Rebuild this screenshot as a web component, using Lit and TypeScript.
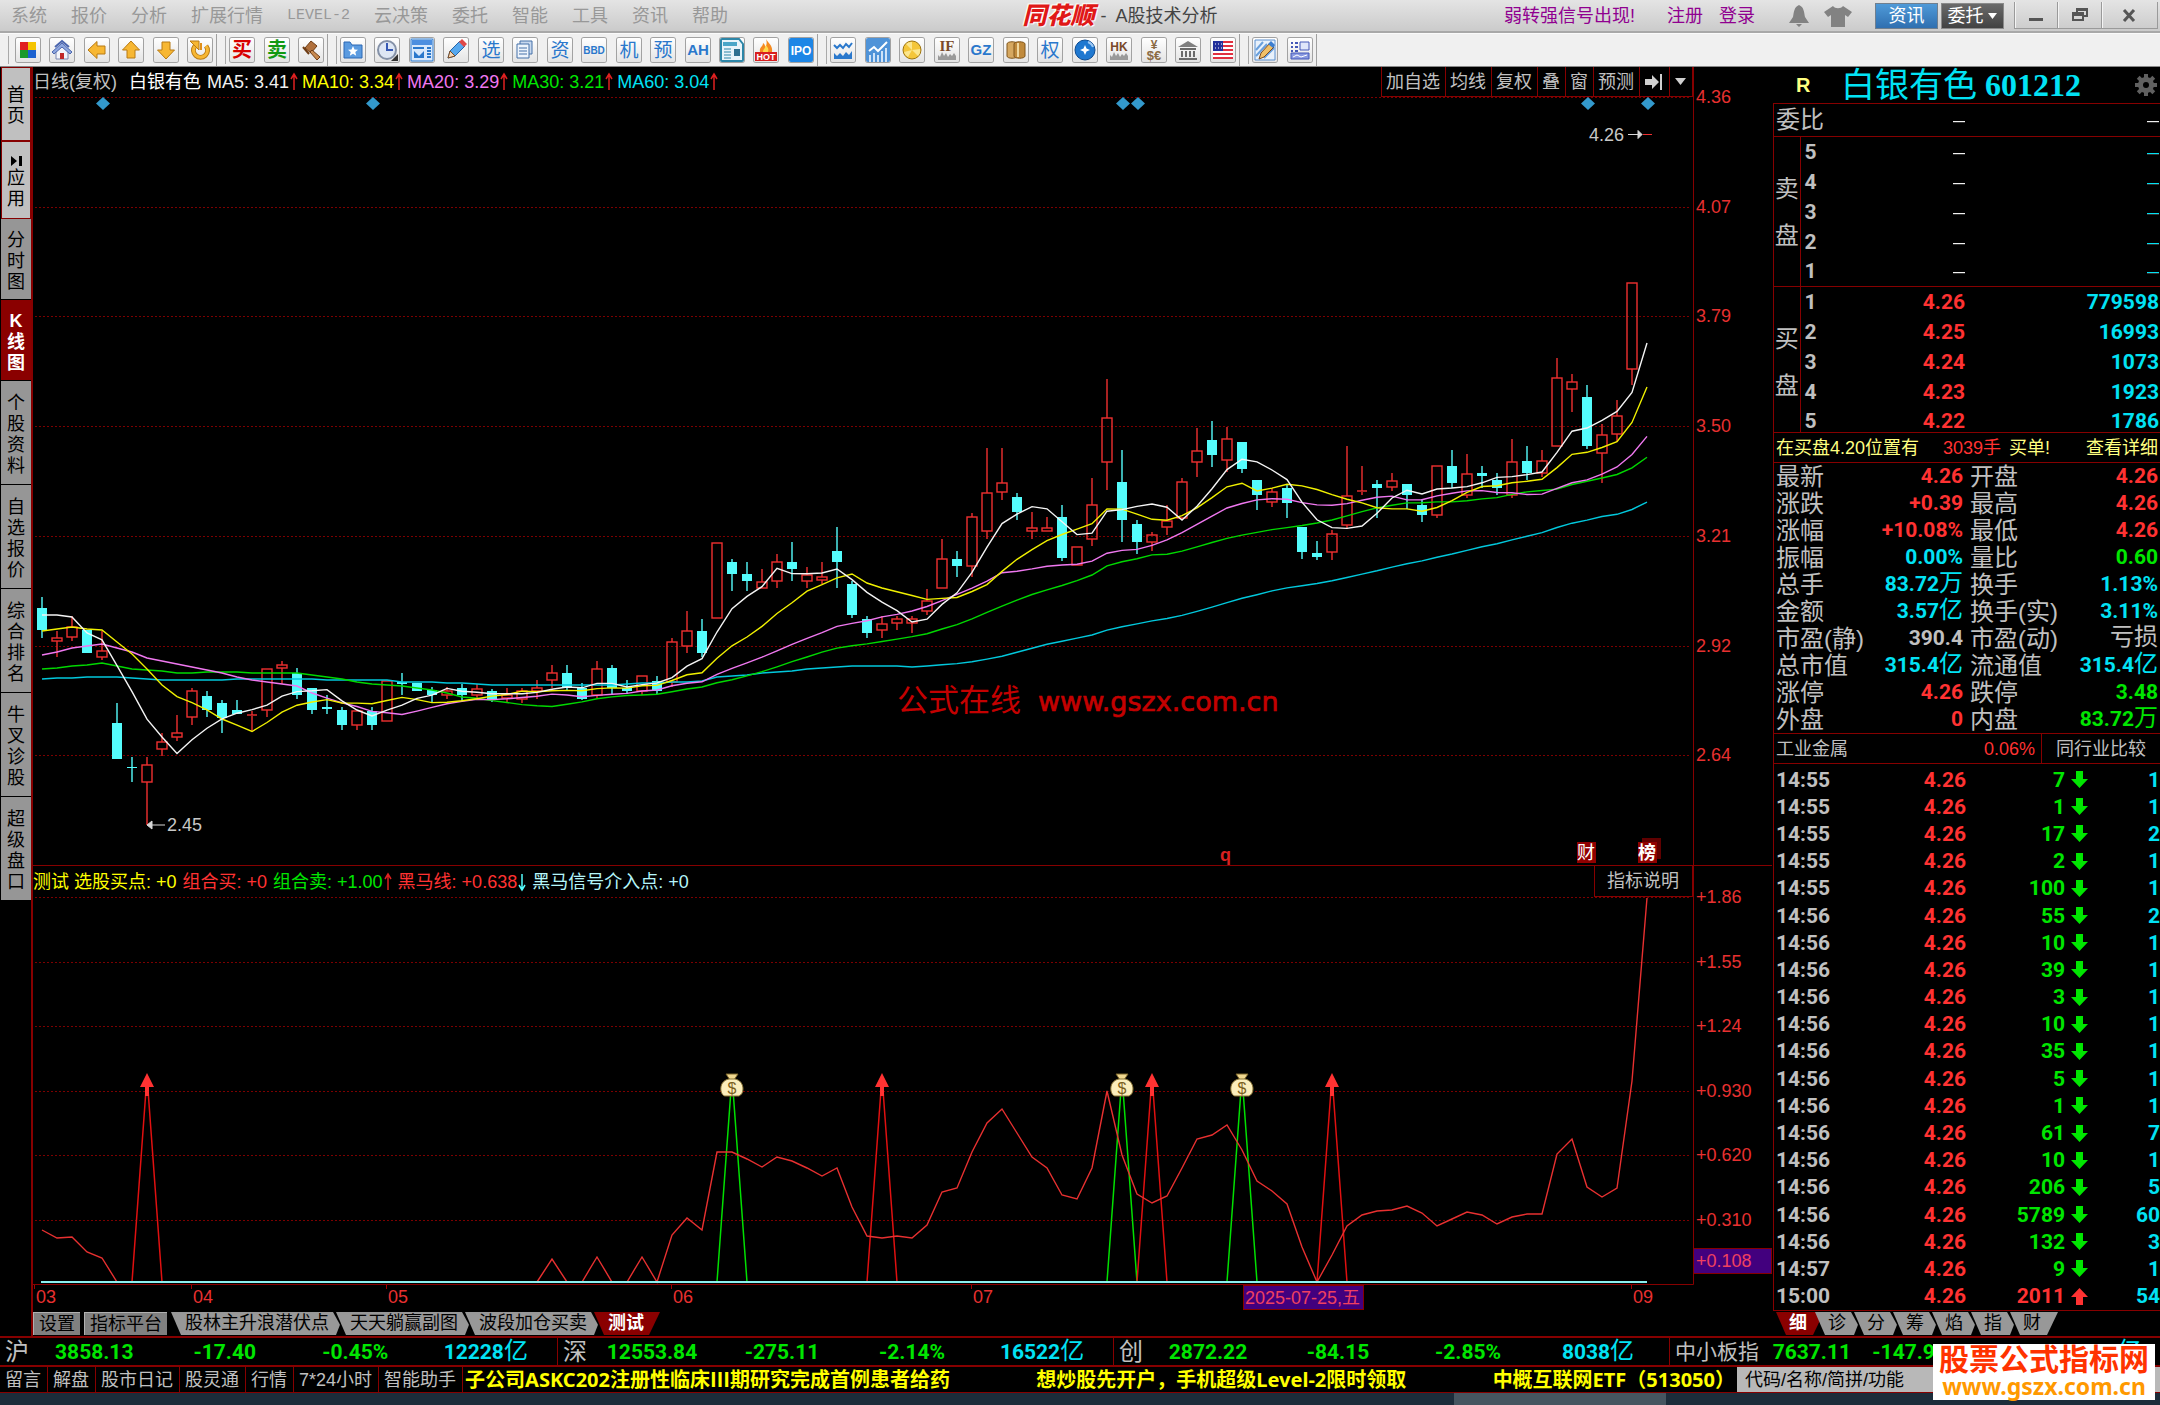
import { LitElement, html, svg, css } from "lit";
import { customElement } from "lit/decorators.js";
import { classMap } from "lit/directives/class-map.js";

/* ---------- chart data, in canvas units ---------- */

// [up?, high, body top, body bottom, low], one entry per trading day
const CANDLES: number[][] = [
  [0, 597, 608, 630, 638], [1, 631, 638, 641, 657], [1, 616, 627, 637, 641], [0, 630, 630, 653, 653],
  [1, 631, 651, 657, 660], [0, 703, 723, 759, 759], [0, 757, 767, 768, 782], [1, 757, 765, 782, 825],
  [1, 733, 742, 749, 756], [1, 715, 733, 737, 741], [1, 688, 691, 717, 725], [0, 691, 696, 710, 717],
  [0, 700, 703, 718, 733], [0, 700, 710, 714, 714], [1, 711, 715, 716, 732], [1, 669, 669, 710, 717],
  [1, 661, 665, 668, 684], [0, 668, 673, 695, 699], [0, 688, 688, 710, 714], [0, 695, 707, 709, 714],
  [0, 707, 710, 725, 730], [1, 711, 711, 725, 730], [0, 707, 711, 725, 730], [1, 681, 681, 721, 721],
  [0, 673, 682, 684, 695], [0, 683, 683, 691, 691], [0, 687, 690, 695, 703], [1, 687, 691, 695, 699],
  [0, 684, 688, 695, 702], [1, 684, 689, 695, 698], [0, 689, 691, 699, 702], [1, 688, 695, 698, 703],
  [1, 688, 691, 699, 703], [1, 680, 688, 691, 699], [1, 665, 673, 680, 688], [0, 665, 673, 688, 691],
  [0, 683, 688, 699, 700], [1, 661, 669, 695, 698], [0, 665, 668, 688, 694], [0, 680, 688, 691, 694],
  [1, 676, 676, 691, 695], [0, 676, 681, 691, 694], [1, 638, 642, 682, 687], [1, 611, 631, 646, 653],
  [0, 619, 631, 653, 657], [1, 543, 543, 618, 618], [0, 559, 562, 574, 591], [0, 562, 574, 581, 591],
  [1, 569, 582, 588, 588], [1, 554, 562, 581, 588], [0, 542, 562, 569, 581], [1, 567, 575, 581, 588],
  [1, 562, 577, 580, 584], [0, 527, 551, 562, 588], [0, 581, 584, 615, 618], [0, 616, 619, 633, 638],
  [1, 616, 624, 630, 638], [1, 616, 619, 623, 630], [1, 616, 619, 623, 633], [1, 589, 601, 611, 615],
  [1, 539, 559, 588, 588], [0, 551, 559, 566, 577], [1, 513, 517, 566, 577], [1, 448, 493, 531, 539],
  [1, 448, 483, 492, 500], [0, 493, 497, 512, 520], [1, 512, 528, 531, 539], [1, 517, 528, 531, 531],
  [0, 505, 517, 558, 561], [1, 547, 547, 565, 565], [1, 478, 505, 539, 546], [1, 379, 418, 462, 490],
  [0, 450, 482, 520, 542], [0, 520, 524, 542, 554], [1, 532, 535, 542, 551], [1, 505, 521, 527, 535],
  [1, 478, 482, 518, 520], [1, 428, 451, 462, 477], [0, 421, 440, 455, 467], [1, 427, 439, 460, 472],
  [0, 442, 442, 469, 473], [0, 480, 480, 495, 510], [1, 488, 492, 502, 507], [0, 484, 488, 503, 518],
  [0, 527, 527, 552, 559], [0, 541, 553, 557, 560], [1, 530, 534, 552, 560], [1, 446, 496, 525, 528],
  [1, 466, 491, 492, 495], [0, 480, 484, 488, 518], [1, 473, 481, 487, 491], [0, 484, 484, 495, 509],
  [0, 499, 505, 515, 522], [1, 466, 466, 515, 518], [0, 450, 466, 483, 488], [1, 454, 474, 495, 498],
  [0, 466, 473, 476, 488], [0, 473, 480, 488, 495], [1, 439, 462, 495, 498], [0, 446, 461, 473, 480],
  [1, 450, 461, 473, 477], [1, 358, 378, 446, 446], [1, 374, 382, 389, 412], [0, 385, 397, 446, 449],
  [1, 424, 435, 453, 483], [1, 400, 416, 434, 442], [1, 283, 283, 369, 385],
];
const LAST_CLOSE = 135;

// averages for the first days, whose history lies left of the canvas
const AVERAGES: { period: number; color: string; lead: number[] }[] = [
  { period: 60, color: "#02c8dc", lead: [679, 678, 678, 677, 677, 677, 678, 679, 680, 680, 680, 680, 680, 679, 679, 679, 679, 679, 679, 680, 680, 680, 680, 680, 682, 682, 682, 683, 683, 684, 685, 685, 685, 685, 685, 685, 685, 685, 685, 684, 683, 683, 682, 682, 681, 677, 676, 675, 673, 672, 671, 669, 668, 667, 666, 666, 666, 666, 667] },
  { period: 30, color: "#00d800", lead: [669, 668, 666, 665, 663, 666, 669, 670, 671, 673, 673, 672, 672, 672, 673, 673, 673, 673, 675, 677, 679, 682, 684, 685, 686, 688, 690, 693, 697] },
  { period: 20, color: "#f078f0", lead: [655, 652, 648, 646, 644, 648, 652, 658, 661, 664, 667, 670, 673, 677, 680, 682, 684, 686, 693] },
  { period: 10, color: "#f0f000", lead: [631, 629, 627, 629, 630, 642, 654, 669, 685] },
  { period: 5, color: "#f4f4f4", lead: [615, 615, 617, 633] },
];

const DARK_HORSE: number[] = [
  1230, 1238, 1237, 1252, 1258, ...new Array(29).fill(1282), 1259, 1282, 1282, 1257, 1282, 1282, 1257, 1282, 1235,
  1218, 1230, 1152, 1152, 1159, 1167, 1157, 1161, 1168, 1176, 1168, 1207, 1236, 1238, 1236, 1238, 1225,
  1192, 1188, 1152, 1123, 1109, 1133, 1157, 1168, 1195, 1199, 1168, 1091, 1155, 1194, 1203, 1196, 1168,
  1139, 1135, 1125, 1150, 1181, 1191, 1204, 1247, 1282, 1255, 1226, 1215, 1211, 1210, 1206, 1213, 1226, 1219, 1212,
  1215, 1224, 1217, 1214, 1214, 1154, 1139, 1187, 1197, 1188, 1081, 898,
];

const px = (i: number) => 42 + 15 * i;
const closes = [...CANDLES.map((c) => (c[0] ? c[2] : c[3])), LAST_CLOSE];

function averagePoints(period: number, lead: number[]): string {
  return closes
    .map((_, i) => {
      const y = i < period - 1 ? lead[i] : closes.slice(i - period + 1, i + 1).reduce((a, b) => a + b, 0) / period;
      return `${px(i)},${Math.round(y * 10) / 10}`;
    })
    .join(" ");
}

/* ---------- small drawings ---------- */

const arrow = (down = false, color = "#e02020") => html`
  <svg class="trend" viewBox="0 0 8 20" width="8" height="20" aria-hidden="true">
    <path d=${down ? "M4 2V18M1 13L4 18L7 13" : "M4 18V2M1 7L4 2L7 7"} fill="none" stroke=${color} stroke-width="1.5" />
  </svg>`;

const glyph = (t: string, color: string, size = 20, weight = 400) =>
  svg`<text x="12" y=${12 + Math.round(size * 0.37)} text-anchor="middle" font-size=${size} font-weight=${weight} fill=${color}>${t}</text>`;

const letters = (t: string, color: string, size: number) =>
  svg`<text x="12" y=${12 + Math.round(size * 0.36)} text-anchor="middle" font-size=${size} font-weight="700" fill=${color}>${t}</text>`;

const GOLD = "#f7b733";
const BLUE = "#2a78cc";
const bigArrow = (turn: number) =>
  svg`<path transform="rotate(${turn} 12 12)" d="M3 12L12 3.5V8H20V16H12V20.5Z" fill=${GOLD} stroke="#b87a14" stroke-linejoin="round"/>`;
const skyline = svg`<path d="M3 22V17L5 19L7 14L9 18L11 15L13 19L15 16L17 18L19 15L21 18V22Z" fill="#9a9a9a"/>`;

const TOOL_GROUPS: { name: string; icons: [string, unknown][] }[] = [
  {
    name: "g6",
    icons: [
      ["板块", svg`<path d="M4 4h8v8H4z" fill="#e02020"/><path d="M12 4h8v8h-8z" fill="#f4c400"/><path d="M4 12h8v8H4z" fill="#1a9a2a"/><path d="M12 12h8v8h-8z" fill="#1c62d0"/>`],
      ["首页", svg`<path d="M6 13V21H18V13L12 8Z" fill="#f2f4fa" stroke="#7b86b0"/><path d="M2 14L12 5L22 14L20 16L12 9L4 16Z" fill="#8fa8e0" stroke="#4b66ae" stroke-linejoin="round"/><path d="M5 9L12 3L19 9" fill="none" stroke="#4b66ae" stroke-width="2"/><path d="M10 15h4v6h-4z" fill="#c02828"/>`],
      ["后退", bigArrow(0)],
      ["向上", bigArrow(90)],
      ["向下", bigArrow(270)],
      ["刷新", svg`<path d="M7 8A7 7 0 1 0 18 8" fill="none" stroke="#b87a14" stroke-width="5"/><path d="M7 8A7 7 0 1 0 18 8" fill="none" stroke=${GOLD} stroke-width="3"/><path d="M2 3H11V12Z" fill=${GOLD} stroke="#b87a14"/><path d="M13 5V12" stroke="#e0901c" stroke-width="2"/>`],
    ],
  },
  {
    name: "g3",
    icons: [
      ["买入", glyph("买", "#d80000", 20, 700)],
      ["卖出", glyph("卖", "#119911", 20, 700)],
      ["交易", svg`<path d="M12 3L18 8L12 15L6 10Z" fill="#b0703c" stroke="#6e3c14"/><path d="M13 12L21 19L18 22L11 14Z" fill="#c88a50" stroke="#6e3c14"/><path d="M4 9L10 16" stroke="#6e3c14" stroke-width="2"/>`],
    ],
  },
  {
    name: "g14",
    icons: [
      ["收藏", svg`<path d="M3 4H9L11 7H21V20H3Z" fill="#5b9be0" stroke="#2c69b4"/><path d="M12 8l1.500 3.500 3.500.3-2.700 2.300.9 3.600-3.200-2-3.200 2 .9-3.600L7 11.800l3.500-.3z" fill="#fff"/>`],
      ["时间", svg`<circle cx="12" cy="12" r="9" fill="#dde6f4" stroke="#8592a8" stroke-width="2"/><path d="M12 5V12H18" fill="none" stroke="#3558b4" stroke-width="2"/><path d="M23 16V23H16Z" fill="#333"/>`],
      ["窗口", svg`<path d="M1 1H23V23H1Z" fill="#d8e8fb" stroke=${BLUE}/><path d="M2 2H22V7H2Z" fill="#4d8fe0"/><path d="M3 10h11M17 10h4M17 13h4M17 16h4M17 19h4" stroke=${BLUE} stroke-width="2"/><path d="M4 13V20H14V13L9 18Z" fill=${BLUE}/>`],
      ["画笔", svg`<path d="M4 20L6 13L16 3L21 8L11 18Z" fill="#57a8ee" stroke="#2465a8"/><path d="M4 20L6 13L11 18Z" fill="#f6d8b8" stroke="#7a4a20"/><path d="M15 4L18 1L23 6L20 9Z" fill="#e04848"/>`],
      ["选股", glyph("选", BLUE, 19)],
      ["多窗", svg`<path d="M7 3H19V16H7Z" fill="#c8d8ee" stroke="#4470a8"/><path d="M4 6H16V20H4Z" fill="#eef4fc" stroke="#4470a8"/><path d="M6 10h8M6 13h8M6 16h8" stroke="#4470a8"/>`],
      ["资金", glyph("资", BLUE, 19)],
      ["BBD", letters("BBD", BLUE, 10)],
      ["机构", glyph("机", BLUE, 19)],
      ["预测", glyph("预", BLUE, 19)],
      ["AH股", letters("AH", BLUE, 15)],
      ["新闻", svg`<path d="M1 1H19L23 6V23H1Z" fill="#e8f4fa" stroke="#2d86a8" stroke-width="2"/><path d="M3 4H17V8H3Z" fill="#4aa6c8"/><path d="M4 11h7M4 14h7M4 17h7M4 20h7" stroke="#2d86a8"/><path d="M14 11H20V18H14Z" fill="#2d7090"/>`],
      ["热点", svg`<path d="M12 1C14 5 19 7 18 14H6C5 9 9 9 9 5C11 6 11 8 11 9C13 7 13 4 12 1Z" fill="#f58a1f"/><path d="M12 7C14 10 15 11 14 14H9C9 11 11 11 12 7Z" fill="#ffd84a"/><path d="M1 14H23V23H1Z" fill="#d81e1e"/><text x="12" y="22" text-anchor="middle" font-size="9" font-weight="700" fill="#fff">HOT</text>`],
      ["新股", svg`<path d="M0 0H24V24H0Z" fill="#1d86e6"/><text x="12" y="17" text-anchor="middle" font-size="12" font-weight="700" fill="#fff">IPO</text>`],
    ],
  },
  {
    name: "g12",
    icons: [
      ["走势", svg`<path d="M3 7L6 10L9 7L12 10L15 6L18 9L21 5" fill="none" stroke=${BLUE} stroke-width="2"/><path d="M3 21V15L6 18L9 15L12 18L15 14L18 17L21 13V21Z" fill=${BLUE}/>`],
      ["大盘", svg`<path d="M0 0H24V24H0Z" fill="#4f93d8"/><path d="M3 13L8 9L12 13L21 4" fill="none" stroke="#fff" stroke-width="2"/><path d="M4 17v7M8 15v9M12 17v7M16 13v11M20 10v14" stroke="#cfe3f8" stroke-width="2"/>`],
      ["黄金", svg`<circle cx="12" cy="12" r="9" fill="#f4c63a" stroke="#9c7410"/><path d="M12 12L6 6A8 8 0 0 1 12 4ZM12 12L20 11A8 8 0 0 1 18 18ZM12 12L8 19A8 8 0 0 1 4 14Z" fill="#fbe68e"/>`],
      ["股指", svg`${skyline}<text class="serif" x="12" y="13" text-anchor="middle" font-size="15" font-weight="700" fill="#7a4a2a">IF</text>`],
      ["国债", letters("GZ", BLUE, 15)],
      ["商品", svg`<path d="M3 6C3 3 13 3 13 6V18C13 21 3 21 3 18Z" fill="#d6a860" stroke="#80561c"/><path d="M10 6C10 3 21 3 21 6V18C21 21 10 21 10 18Z" fill="#c08a3c" stroke="#80561c"/><path d="M14 5V19" stroke="#f0d8a0" stroke-width="2"/>`],
      ["权证", glyph("权", BLUE, 19)],
      ["基金", svg`<circle cx="12" cy="12" r="10" fill="#1f78d0" stroke="#0f4c90"/><path d="M15 4A8 8 0 0 1 20 9" fill="none" stroke="#9cc8f4" stroke-width="2"/><path d="M12 7L13.500 10.500L17 12L13.500 13.500L12 17L10.500 13.500L7 12L10.500 10.500Z" fill="#fff"/>`],
      ["港股", svg`${skyline}<text x="12" y="13" text-anchor="middle" font-size="12" font-weight="700" fill="#7a4a2a">HK</text>`],
      ["外汇", svg`<text x="12" y="11" text-anchor="middle" font-size="12" font-weight="700" fill="#8a6a44">¥</text><text x="12" y="22" text-anchor="middle" font-size="13" font-weight="700" fill="#8a6a44">$€</text>`],
      ["银行", svg`<path d="M12 3L22 9H2Z" fill="#808080"/><path d="M4 10h16v2H4zM5 13h2v6H5zM9 13h2v6H9zM13 13h2v6h-2zM17 13h2v6h-2zM3 20h18v2H3z" fill="#6a6a6a"/>`],
      ["美股", svg`<path d="M2 3H22V21H2Z" fill="#fff"/><path d="M2 4h20M2 8h20M2 12h20M2 16h20M2 20h20" stroke="#e03040" stroke-width="2"/><path d="M2 3H12V13H2Z" fill="#23309a"/><path d="M4 6h1M7 6h1M10 6h1M4 10h1M7 10h1M10 10h1" stroke="#fff"/>`],
    ],
  },
  {
    name: "g2",
    icons: [
      ["画线", svg`<path d="M2 2H22V22H2Z" fill="#e8f1fb" stroke="#5a90d0"/><path d="M3 12L10 4M3 18L14 6M11 20L21 10" stroke="#6aa0dc" stroke-width="2"/><path d="M6 21L8 15L17 5L21 9L11 19Z" fill="#f0c068" stroke="#7a4a20"/><path d="M15 6L18 3L22 7L20 10Z" fill="#3c7ed0"/>`],
      ["布局", svg`<path d="M3 5h2M7 5h3M3 9h2M7 9h3M3 13h2M7 13h3" stroke="#4458b8" stroke-width="2"/><path d="M12 4H21V12H12Z" fill="#dfe6fa" stroke="#4458b8"/><path d="M3 15H21V21H3Z" fill="#8898e0" stroke="#4458b8"/><path d="M5 19L9 17L13 19L19 17" fill="none" stroke="#fff"/>`],
    ],
  },
];

/* ---------- texts ---------- */

const MENU = ["系统", "报价", "分析", "扩展行情", "LEVEL-2", "云决策", "委托", "智能", "工具", "资讯", "帮助"];
const SIDE = ["首页", "应用", "分时图", "K线图", "个股资料", "自选报价", "综合排名", "牛叉诊股", "超级盘口"];
const CHART_TOOLS = ["加自选", "均线", "复权", "叠", "窗", "预测"];
const BIDS = [["1", "4.26", "779598"], ["2", "4.25", "16993"], ["3", "4.24", "1073"], ["4", "4.23", "1923"], ["5", "4.22", "1786"]];

type Cell = [string, string, string, string?];
const STATS: [Cell, Cell][] = [
  [["最新", "4.26", "red"], ["开盘", "4.26", "red"]],
  [["涨跌", "+0.39", "red"], ["最高", "4.26", "red"]],
  [["涨幅", "+10.08%", "red"], ["最低", "4.26", "red"]],
  [["振幅", "0.00%", "cyan"], ["量比", "0.60", "green"]],
  [["总手", "83.72", "cyan", "万"], ["换手", "1.13%", "cyan"]],
  [["金额", "3.57", "cyan", "亿"], ["换手(实)", "3.11%", "cyan"]],
  [["市盈(静)", "390.4", "grey"], ["市盈(动)", "", "grey", "亏损"]],
  [["总市值", "315.4", "cyan", "亿"], ["流通值", "315.4", "cyan", "亿"]],
  [["涨停", "4.26", "red"], ["跌停", "3.48", "green"]],
  [["外盘", "0", "red"], ["内盘", "83.72", "green", "万"]],
];

const TICKS: [string, string, string][] = [
  ["14:55", "7", "1"], ["14:55", "1", "1"], ["14:55", "17", "2"], ["14:55", "2", "1"], ["14:55", "100", "1"],
  ["14:56", "55", "2"], ["14:56", "10", "1"], ["14:56", "39", "1"], ["14:56", "3", "1"], ["14:56", "10", "1"],
  ["14:56", "35", "1"], ["14:56", "5", "1"], ["14:56", "1", "1"], ["14:56", "61", "7"], ["14:56", "10", "1"],
  ["14:56", "206", "5"], ["14:56", "5789", "60"], ["14:56", "132", "3"], ["14:57", "9", "1"], ["15:00", "2011", "54"],
];

const INDICES = [
  ["沪", "3858.13", "-17.40", "-0.45%", "12228"],
  ["深", "12553.84", "-275.11", "-2.14%", "16522"],
  ["创", "2872.22", "-84.15", "-2.85%", "8038"],
  ["中小板指", "7637.11", "-147.98", "-1.90%", "1894"],
];
const LINKS = ["留言", "解盘", "股市日记", "股灵通", "行情", "7*24小时", "智能助手"];

@customElement("app-root")
export class AppRoot extends LitElement {
  static styles = css`
    :host {
      display: block;
      --line: #860000;
      --red: #ff3232;
      --green: #00e600;
      --cyan: #02e2f4;
      --grey: #c0c0c0;
      color: var(--grey);
      background: #000;
      font-family: "Liberation Sans", "Noto Sans CJK SC", sans-serif;
      font-size: 18px;
      line-height: 24px;
    }
    * { box-sizing: border-box; }
    button { font: inherit; color: inherit; background: none; border: 0; padding: 0; margin: 0; white-space: nowrap; }
    a { color: inherit; text-decoration: none; white-space: nowrap; }
    table { border-collapse: collapse; border-spacing: 0; width: 100%; }
    td, th { padding: 0; font-weight: 400; text-align: left; white-space: nowrap; }
    svg { display: block; flex: none; }
    .app { position: relative; min-height: 100vh; display: flex; flex-direction: column; }
    .red { color: var(--red); }
    .green { color: var(--green); }
    .cyan { color: var(--cyan); }
    .grey { color: var(--grey); }
    .yellow { color: #ffff00; }
    .white { color: #f0f0f0; }
    .ma20 { color: #f078f0; }
    .pale { color: #b4f6fa; }
    .num { font-family: Roboto, "Noto Sans CJK SC", sans-serif; font-weight: 700; font-size: 21px; }
    .unit { font-weight: 400; font-size: 24px; line-height: 0; }

    /* title bar */
    .title-bar { display: flex; align-items: center; height: 33px; background: linear-gradient(#e4e4e4, #cbcbcb); border-bottom: 2px solid #a8a8a8; }
    .menu { display: flex; gap: 24px; padding-left: 11px; color: #989898; }
    .menu .mono { font-family: "Liberation Mono", monospace; font-size: 15px; }
    .title { display: flex; align-items: center; gap: 6px; margin: 0 auto; padding-left: 8px; color: #444; }
    .logo { font-weight: 900; font-style: italic; font-size: 24px; color: #e01818; text-shadow: 0 0 2px #fff, 1px 1px 1px #fff, -1px -1px 1px #fff; }
    .account { display: flex; align-items: center; color: #900090; }
    .account .login { margin-left: 32px; display: flex; gap: 16px; }
    .account .tools { display: flex; gap: 13px; margin: 0 22px 0 33px; }
    .account .pair { display: flex; gap: 3px; margin-right: 10px; color: #fff; }
    .pair button { width: 63px; height: 26px; border: 1px solid #6f7f8f; background: linear-gradient(#4f9ad8, #2f6fb0); }
    .pair .dark { background: linear-gradient(#6a6a6a, #424242); border-color: #8a8a8a; display: flex; align-items: center; justify-content: center; gap: 5px; }
    .window { display: flex; width: 146px; height: 27px; padding-right: 2px; }
    .window button { flex: 1; display: flex; align-items: center; justify-content: center; border: 1px solid #9a9a9a; border-top: 0; border-right-width: 0; box-shadow: inset 1px 0 #f4f4f4; }
    .window button:last-child { flex: 1.3; border-right-width: 1px; }

    /* tool bar */
    .tool-bar { display: flex; height: 34px; background: #f0f0f0; border-top: 1px solid #fafafa; border-bottom: 1px solid #888; }
    .group { display: flex; align-items: center; justify-content: space-between; height: 32px; padding: 0 4px 0 13px; border-right: 1px solid #a0a0a0; background: linear-gradient(#aaa, #aaa) 8px 2px / 1px 28px no-repeat; }
    .group button { width: 24px; height: 24px; border-radius: 2px; background: linear-gradient(#fff, #e4e4e4); box-shadow: 0 0 0 1px #a2a2a2; overflow: hidden; }
    .g6 { width: 217px; padding-left: 16px; }
    .g3 { width: 111px; }
    .g14 { width: 490px; }
    .g12 { width: 422px; }
    .g2 { width: 77px; }
    svg text { font-family: "Liberation Sans", "Noto Sans CJK SC", sans-serif; }
    svg .serif { font-family: "Liberation Serif", serif; }
    svg .url { font-family: "DejaVu Sans", sans-serif; }

    /* main area */
    .main { display: flex; align-items: stretch; flex: 1; }
    .side { flex: none; width: 33px; padding-left: 1px; border-right: 2px solid var(--line); background: #000; }
    .side button { display: flex; flex-direction: column; align-items: center; justify-content: center; width: 30px; min-height: 74px; padding: 10px 6px 6px; border-bottom: 1px solid #000; background: #969696; color: #000; line-height: 21px; white-space: normal; }
    .side button + button { min-height: 78px; }
    .side .light { background: #c0c0c0; border: 1px solid var(--line); }
    .side .three { min-height: 81px; }
    .side .four { min-height: 104px; }
    .side .on { background: #8a0000; color: #fff; font-weight: 700; }

    .chart { flex: 1; min-width: 0; display: flex; flex-direction: column; }
    .legend { display: flex; align-items: center; height: 30px; padding-right: 79px; }
    .legend .item { display: flex; align-items: center; white-space: nowrap; }
    .legend .trend { margin: 0 4px 0 1px; }
    .legend .name { color: #fff; margin: 0 6px 0 12px; }
    .legend .box { display: flex; margin-left: auto; align-self: stretch; border: solid var(--line); border-width: 0 1px 1px 0; }
    .legend .box button { padding: 0 5px 0 4px; border-left: 1px solid var(--line); }
    .legend.sub { height: 32px; border-top: 1px solid var(--line); gap: 6px; }
    .legend.sub .trend { margin: 0 0 0 1px; }
    .legend.sub .box button { padding: 0 13px 0 12px; }
    .plot { width: 100%; height: auto; overflow: visible; }

    .tabs { display: flex; height: 25px; padding-top: 1px; align-items: flex-start; color: #000; }
    .tabs button { height: 23px; line-height: 23px; background: #989898; }
    .tabs .plain { padding: 0 5px; margin-right: 4px; background: #808080; border: solid #b0b0b0; border-width: 1px 0 0 1px; line-height: 22px; }
    .tabs .slant { padding: 0 11px 0 14px; margin-right: -4px; clip-path: polygon(0 0, calc(100% - 7px) 0, 100% 55%, calc(100% - 4px) 100%, 10px 100%); }
    .tabs .last { clip-path: polygon(0 0, 100% 0, calc(100% - 11px) 100%, 10px 100%); padding-right: 16px; }
    .tabs .on { background: #8a0000; color: #fff; font-weight: 700; }
    .mini { padding-left: 4px; }
    .mini .slant { padding: 0 12px 0 13px; }
    .mini .last { padding-right: 17px; }
    .mini .on { margin-right: -9px; }

    /* quote panel */
    .quote { flex: none; width: 388px; display: flex; flex-direction: column; }
    .stock { display: flex; align-items: center; height: 36px; padding: 0 3px 0 24px; color: var(--cyan); }
    .stock .flag { color: #ffff80; font-size: 20px; width: 45px; font-weight: 700; }
    .stock .cn { font-size: 34px; margin-right: 8px; line-height: 36px; }
    .stock .code { font: 700 32px/36px "Liberation Serif", serif; }
    .stock .gear { margin-left: auto; }
    .body { flex: 1; margin-left: 1px; border-left: 1px solid var(--line); border-top: 1px solid var(--line); display: flex; flex-direction: column; }
    .big { font-size: 24px; padding-left: 2px; }
    .book tr { height: 30px; line-height: 30px; }
    .book .ratio { height: 32px; line-height: 32px; }
    .book tbody { border-top: 1px solid var(--line); }
    .book tbody tr:last-child { height: 29px; line-height: 29px; }
    .book .kind { width: 26px; border-right: 1px solid var(--line); font-size: 24px; line-height: 47px; text-align: center; }
    .book .lv { width: 32px; padding-left: 4px; }
    .book .price { width: 133px; text-align: right; }
    .book .vol { text-align: right; padding-right: 1px; }
    .dash { display: inline-block; width: 12px; height: 1px; background: currentColor; vertical-align: middle; box-shadow: 0 1px rgba(255, 255, 255, 0.2); }
    .notice { display: flex; align-items: center; height: 31px; margin-top: -4px; padding: 0 2px; border: solid var(--line); border-width: 1px 0; background: #000; color: #ffff80; }
    .notice .lots { margin: 0 8px 0 24px; }
    .notice .more { margin-left: auto; }
    .stats { table-layout: fixed; }
    .stats tr { height: 27px; line-height: 27px; }
    .stats th { font-size: 24px; padding-left: 2px; width: 98px; }
    .stats td { text-align: right; }
    .stats td:nth-child(2) { width: 91px; }
    .stats td:last-child { padding-right: 2px; }
    .stats th:nth-child(3) { padding-left: 7px; }
    .sector { display: flex; align-items: stretch; height: 31px; line-height: 30px; border: solid var(--line); border-width: 1px 0; padding-left: 2px; }
    .sector .rate { margin-left: auto; padding-right: 6px; }
    .sector button { width: 119px; border-left: 1px solid var(--line); }
    .ticks { flex: 1; display: grid; padding-top: 2px; border-bottom: 1px solid var(--line); }
    .ticks tr { line-height: 26px; }
    .ticks .time { width: 100px; padding-left: 2px; }
    .ticks .price { width: 92px; text-align: right; }
    .ticks .lot { width: 99px; text-align: right; }
    .ticks .dir { width: 28px; padding-left: 6px; }
    .ticks .cnt { text-align: right; }

    /* bottom bars */
    .indices { display: grid; grid-template-columns: 557fr 556fr 556fr 491fr; height: 31px; border: solid var(--line); border-width: 2px 0 2px; }
    .index { display: grid; grid-template-columns: 24px repeat(4, 1fr); align-items: center; padding: 0 6px 0 5px; white-space: nowrap; text-align: center; }
    .index + .index { border-left: 1px solid var(--line); }
    .index.wide { grid-template-columns: 88px repeat(4, 1fr); }
    .index .tag { font-size: 24px; text-align: left; }
    .wide .tag { font-size: 21px; }
    .status { display: flex; align-items: stretch; height: 26px; border-bottom: 1px solid var(--line); }
    .status button { padding: 0 6px 0 5px; border-right: 1px solid var(--line); }
    .ticker { flex: 1; display: flex; justify-content: space-between; overflow: hidden; padding: 0 2px; white-space: nowrap; color: #ffff00; font: 700 20px/25px "Noto Sans", "Noto Sans CJK SC", sans-serif; }
    .status input { width: 423px; border: 0; border-radius: 0; padding: 0 8px; background: #b8b8b8; font: inherit; color: #000; outline: none; }
    .status input::placeholder { color: #000; opacity: 1; }
    .desk { height: 12px; background: #1c2c3a; display: grid; grid-template-columns: 1454fr 212fr 494fr; }
    .desk .active { grid-column: 2; background: #465560; }
    .stamp { position: absolute; right: 5px; bottom: 5px; width: 222px; height: 56px; background: #fff; text-align: center; font-weight: 700; white-space: nowrap; }
    .stamp .zh { font-size: 30px; line-height: 31px; color: #ff3300; }
    .stamp .url { font: 700 23px/22px "Noto Sans", sans-serif; color: #ff9900; }
  `;

  private titleBar() {
    return html`<header class="title-bar">
      <nav class="menu">${MENU.map((m) => html`<button class=${m === "LEVEL-2" ? "mono" : ""}>${m}</button>`)}</nav>
      <div class="title"><span class="logo">同花顺</span><span>-&nbsp; A股技术分析</span></div>
      <div class="account">
        <a href="#signal">弱转强信号出现!</a>
        <span class="login"><a href="#register">注册</a><a href="#login">登录</a></span>
        <span class="tools">
          <button aria-label="提醒">
            <svg width="22" height="24" viewBox="0 0 22 24"><path d="M11 1C16 3 16 8 17 13L21 19H1L5 13C6 8 6 3 11 1ZM8 20H14L11 23Z" fill="#828282" /></svg>
          </button>
          <button aria-label="换肤">
            <svg width="30" height="24" viewBox="0 0 30 24"><path d="M10 2C12 5 18 5 20 2L29 8L25 13L22 11V23H8V11L5 13L1 8Z" fill="#828282" /></svg>
          </button>
        </span>
        <span class="pair">
          <button>资讯</button>
          <button class="dark">委托<svg width="9" height="6" viewBox="0 0 9 6"><path d="M0 0H9L4.500 6Z" fill="#fff" /></svg></button>
        </span>
        <span class="window">
          <button aria-label="最小化"><svg width="16" height="16" viewBox="0 0 16 16"><path d="M1 11H15V14H1Z" fill="#555" /></svg></button>
          <button aria-label="还原"><svg width="18" height="16" viewBox="0 0 18 16"><path d="M6 5V2H16V9H13M2 6H12V13H2ZM2 8H12M6 3H16" fill="none" stroke="#555" stroke-width="2" /></svg></button>
          <button aria-label="关闭"><svg width="16" height="16" viewBox="0 0 16 16"><path d="M3 3L13 14M13 3L3 14" stroke="#555" stroke-width="3" /></svg></button>
        </span>
      </div>
    </header>`;
  }

  private toolBar() {
    return html`<div class="tool-bar" role="toolbar">
      ${TOOL_GROUPS.map(
        (g) => html`<div class="group ${g.name}">
          ${g.icons.map(([label, art]) => html`<button aria-label=${label}><svg width="24" height="24" viewBox="0 0 24 24">${art}</svg></button>`)}
        </div>`
      )}
    </div>`;
  }

  private sideBar() {
    return html`<nav class="side">
      ${SIDE.map((s, i) => {
        const cls = classMap({ light: i < 2, on: i === 3, three: i === 2 || i === 3, four: i > 3 });
        return html`<button class=${cls}>
          ${i === 1 ? html`<svg width="12" height="14" viewBox="0 0 12 14"><path d="M1 2L7 7L1 12ZM9 2H12V12H9Z" fill="#000" /></svg>` : null}
          <span>${s}</span>
        </button>`;
      })}
    </nav>`;
  }

  private pricePlot() {
    const levels = ["4.36", "4.07", "3.79", "3.50", "3.21", "2.92", "2.64"];
    return html`<svg class="plot" viewBox="33 97 1739 768" role="img" aria-label="日线K线图">
      ${levels.map((t, i) => {
        const y = 97 + Math.round(i * 109.7);
        return svg`<line x1="35" x2="1691" y1=${y + 0.5} y2=${y + 0.5} stroke="#7c0000" stroke-dasharray="2 2"/>
          <text x="1696" y=${y + 6} font-size="18" fill="#e83030">${t}</text>`;
      })}
      <line x1="1693.5" x2="1693.5" y1="67" y2="865" stroke="#860000" />
      ${[4, 22, 72, 73, 103, 107].map((i) => svg`<path d="M${px(i) + 1} 97l7 6.500l-7 6.500l-7 -6.500Z" fill="#3399cc"/>`)}
      ${CANDLES.map(([up, h, t, b, l], i) => {
        const x = px(i);
        const tall = b - t > 2;
        return up
          ? svg`<path d="M${x} ${h}V${t}M${x} ${b}V${l}" stroke="#f03030" stroke-width="1.400"/>
              ${tall ? svg`<rect x=${x - 5} y=${t} width="10" height=${b - t} fill="none" stroke="#f03030" stroke-width="1.400"/>` : svg`<path d="M${x - 5} ${t}H${x + 5}" stroke="#f03030" stroke-width="1.400"/>`}`
          : svg`<path d="M${x} ${h}V${l}" stroke="#54fcfc" stroke-width="1.400"/>
              <rect x=${x - 5} y=${t} width="10" height=${Math.max(1, b - t)} fill="#54fcfc"/>`;
      })}
      ${AVERAGES.map((a) => svg`<polyline points=${averagePoints(a.period, a.lead)} fill="none" stroke=${a.color} stroke-width="1.400"/>`)}
      <text x="1589" y="141" font-size="18" fill="#c8c8c8">4.26</text>
      <path d="M1628 134.500H1642M1642 134.500l-4 -4v8Z" fill="#d8d8d8" stroke="#d8d8d8" />
      <path d="M1643 134.500H1652" stroke="#f03030" />
      <text x="167" y="831" font-size="18" fill="#c8c8c8">2.45</text>
      <path d="M150 825H165M147 825l5 -4v8Z" fill="#d8d8d8" stroke="#d8d8d8" />
      <text x="897" y="711" font-size="31" fill="#c40000">公式在线</text>
      <text class="url" x="1038" y="711" font-size="27" fill="#c40000" stroke="#c40000" stroke-width="0.700">www.gszx.com.cn</text>
      <text x="1220" y="861" font-size="18" font-weight="700" fill="#d82020">q</text>
      <rect x="1577" y="842" width="19" height="21" fill="#900000" />
      <text x="1577" y="859" font-size="18" fill="#fff">财</text>
      <rect x="1642" y="838" width="19" height="21" fill="#600000" />
      <rect x="1638" y="842" width="19" height="21" fill="#900000" />
      <text x="1638" y="859" font-size="18" font-weight="700" fill="#fff">榜</text>
    </svg>`;
  }

  private signalPlot() {
    const levels = ["+1.86", "+1.55", "+1.24", "+0.930", "+0.620", "+0.310"];
    const months: [string, number][] = [["03", 34], ["04", 191], ["05", 386], ["06", 671], ["07", 971], ["09", 1631]];
    return html`<svg class="plot" viewBox="33 897 1739 414" role="img" aria-label="测试指标">
      ${levels.map((t, i) => {
        const y = 897 + Math.round(i * 64.5);
        return svg`<line x1="35" x2="1691" y1=${y + 0.5} y2=${y + 0.5} stroke="#7c0000" stroke-dasharray="2 2"/>
          <text x="1696" y=${y + 6} font-size="18" fill="#e83030">${t}</text>`;
      })}
      <path d="M1693.500 865V1284.500H33" fill="none" stroke="#860000" />
      ${[46, 72, 80].map((i) => svg`<path d="M${px(i) - 15} 1282L${px(i)} 1076L${px(i) + 15} 1282" fill="none" stroke="#00e000" stroke-width="1.500"/>`)}
      ${[7, 56, 74, 86].map(
        (i) => svg`<path d="M${px(i) - 15} 1282L${px(i)} 1076L${px(i) + 15} 1282" fill="none" stroke="#e01010" stroke-width="1.500"/>
          <path d="M${px(i)} 1073L${px(i) + 7} 1087H${px(i) + 2}V1096H${px(i) - 2}V1087H${px(i) - 7}Z" fill="#ff3232"/>`
      )}
      <polyline points=${DARK_HORSE.map((y, i) => `${px(i)},${y}`).join(" ")} fill="none" stroke="#e83030" stroke-width="1.400" />
      <path d="M41 1282H1647" stroke="#8cf0f0" stroke-width="2" />
      ${[46, 72, 80].map(
        (i) => svg`<g transform="translate(${px(i) - 12} 1073)">
          <path d="M6 1H18L14 7H10Z" fill="#f0d890" stroke="#7a6428"/>
          <path d="M9 6C3 7 0 12 1 18C2 22 4 23 5 23H19C21 22 23 20 23 16C23 11 20 7 15 6Z" fill="#fbeebc" stroke="#8a7434"/>
          <text x="12" y="21" text-anchor="middle" font-size="16" fill="#7a6020">$</text>
        </g>`
      )}
      ${months.map(([t, x]) => svg`<path d="M${x + 0.5} 1285V1289" stroke="#a00000"/><text x=${x + 2} y="1303" font-size="18" fill="#e83030">${t}</text>`)}
      <rect x="1243.500" y="1285.500" width="120" height="24" fill="#42007e" stroke="#860000" />
      <text x="1245" y="1304" font-size="18" fill="#f04060">2025-07-25,五</text>
      <rect x="1693.500" y="1248.500" width="78" height="25" fill="#42007e" stroke="#860000" />
      <text x="1696" y="1267" font-size="18" fill="#f04060">+0.108</text>
    </svg>`;
  }

  private chart() {
    return html`<section class="chart">
      <div class="legend">
        <span>日线(复权)</span><span class="name">白银有色</span>
        <span class="item white">MA5: 3.41${arrow()}</span>
        <span class="item yellow">MA10: 3.34${arrow()}</span>
        <span class="item ma20">MA20: 3.29${arrow()}</span>
        <span class="item green">MA30: 3.21${arrow()}</span>
        <span class="item cyan">MA60: 3.04${arrow()}</span>
        <span class="box">
          ${CHART_TOOLS.map((t) => html`<button>${t}</button>`)}
          <button aria-label="移到最后"><svg width="20" height="18" viewBox="0 0 20 18"><path d="M1 6H8V2L15 9L8 16V12H1ZM16 1H18V17H16Z" fill="#d0d0d0" /></svg></button>
          <button aria-label="更多"><svg width="13" height="7" viewBox="0 0 13 7"><path d="M1 0H12L6.500 7Z" fill="#d0d0d0" /></svg></button>
        </span>
      </div>
      ${this.pricePlot()}
      <div class="legend sub">
        <span class="yellow">测试 选股买点: +0</span>
        <span class="red">组合买: +0</span>
        <span class="item green">组合卖: +1.00${arrow()}</span>
        <span class="item red">黑马线: +0.638${arrow(true, "#54fcfc")}</span>
        <span class="pale">黑马信号介入点: +0</span>
        <span class="box"><button>指标说明</button></span>
      </div>
      ${this.signalPlot()}
      <div class="tabs">
        <button class="plain">设置</button><button class="plain">指标平台</button>
        <button class="slant">股林主升浪潜伏点</button><button class="slant">天天躺赢副图</button>
        <button class="slant">波段加仓买卖</button><button class="slant last on">测试</button>
      </div>
    </section>`;
  }

  private statCells([label, value, tone, unit]: Cell) {
    return html`<th scope="row">${label}</th>
      <td class="num ${tone}">${value}${unit ? html`<span class="unit">${unit}</span>` : null}</td>`;
  }

  private quote() {
    const dash = html`<span class="dash"></span>`;
    return html`<aside class="quote">
      <div class="stock">
        <span class="flag">R</span><span class="cn">白银有色</span><span class="code">601212</span>
        <button class="gear" aria-label="设置">
          <svg width="22" height="22" viewBox="-11 -11 22 22">
            ${[0, 45, 90, 135].map((r) => svg`<path transform="rotate(${r})" d="M-2 -11H2V11H-2Z" fill="#606060"/>`)}
            <circle r="5.500" fill="none" stroke="#606060" stroke-width="5" /><circle r="3" fill="#000" />
          </svg>
        </button>
      </div>
      <div class="body">
        <table class="book">
          <thead>
            <tr class="ratio"><th colspan="2" class="big">委比</th><td class="price white">${dash}</td><td class="vol white">${dash}</td></tr>
          </thead>
          <tbody>
            ${[5, 4, 3, 2, 1].map(
              (n, i) => html`<tr>
                ${i === 0 ? html`<th class="kind" rowspan="5">卖<br />盘</th>` : null}
                <td class="lv num">${n}</td><td class="price white">${dash}</td><td class="vol cyan">${dash}</td>
              </tr>`
            )}
          </tbody>
          <tbody>
            ${BIDS.map(
              ([n, p, v], i) => html`<tr>
                ${i === 0 ? html`<th class="kind" rowspan="5">买<br />盘</th>` : null}
                <td class="lv num">${n}</td><td class="price num red">${p}</td><td class="vol num cyan">${v}</td>
              </tr>`
            )}
          </tbody>
        </table>
        <div class="notice"><span>在买盘4.20位置有</span><span class="lots red">3039手</span><span>买单!</span><a class="more" href="#detail">查看详细</a></div>
        <table class="stats">
          ${STATS.map(([a, b]) => html`<tr>${this.statCells(a)}${this.statCells(b)}</tr>`)}
        </table>
        <div class="sector"><span>工业金属</span><span class="rate red">0.06%</span><button>同行业比较</button></div>
        <div class="ticks">
          <table>
            ${TICKS.map(([t, v, c], i) => {
              const up = i === TICKS.length - 1;
              return html`<tr>
                <td class="time num">${t}</td><td class="price num red">4.26</td>
                <td class="lot num ${up ? "red" : "green"}">${v}</td>
                <td class="dir ${up ? "red" : "green"}"><svg width="17" height="17" viewBox="0 0 17 17"><path d=${up ? "M8.500 0L17 9H12V17H5V9H0Z" : "M8.500 17L17 8H12V0H5V8H0Z"} fill="currentColor" /></svg></td>
                <td class="cnt num cyan">${c}</td>
              </tr>`;
            })}
          </table>
        </div>
      </div>
      <div class="tabs mini">
        ${["细", "诊", "分", "筹", "焰", "指", "财"].map(
          (t, i) => html`<button class=${classMap({ slant: true, on: i === 0, last: i === 0 || i === 6 })}>${t}</button>`
        )}
      </div>
    </aside>`;
  }

  render() {
    return html`<div class="app">
      ${this.titleBar()} ${this.toolBar()}
      <main class="main">${this.sideBar()} ${this.chart()} ${this.quote()}</main>
      <div class="indices">
        ${INDICES.map(
          ([n, a, b, c, d], i) => html`<div class="index ${i === 3 ? "wide" : ""}">
            <span class="tag">${n}</span><span class="num green">${a}</span><span class="num green">${b}</span>
            <span class="num green">${c}</span><span class="num cyan">${d}<span class="unit">亿</span></span>
          </div>`
        )}
      </div>
      <footer class="status">
        ${LINKS.map((l) => html`<button>${l}</button>`)}
        <div class="ticker"><span>子公司ASKC202注册性临床Ⅲ期研究完成首例患者给药</span><span>想炒股先开户，手机超级Level-2限时领取</span><span>中概互联网ETF（513050）</span></div>
        <input type="text" aria-label="代码/名称/简拼/功能" placeholder="代码/名称/简拼/功能" />
      </footer>
      <div class="desk"><span class="active"></span></div>
      <div class="stamp"><div class="zh">股票公式指标网</div><div class="url">www.gszx.com.cn</div></div>
    </div>`;
  }
}
